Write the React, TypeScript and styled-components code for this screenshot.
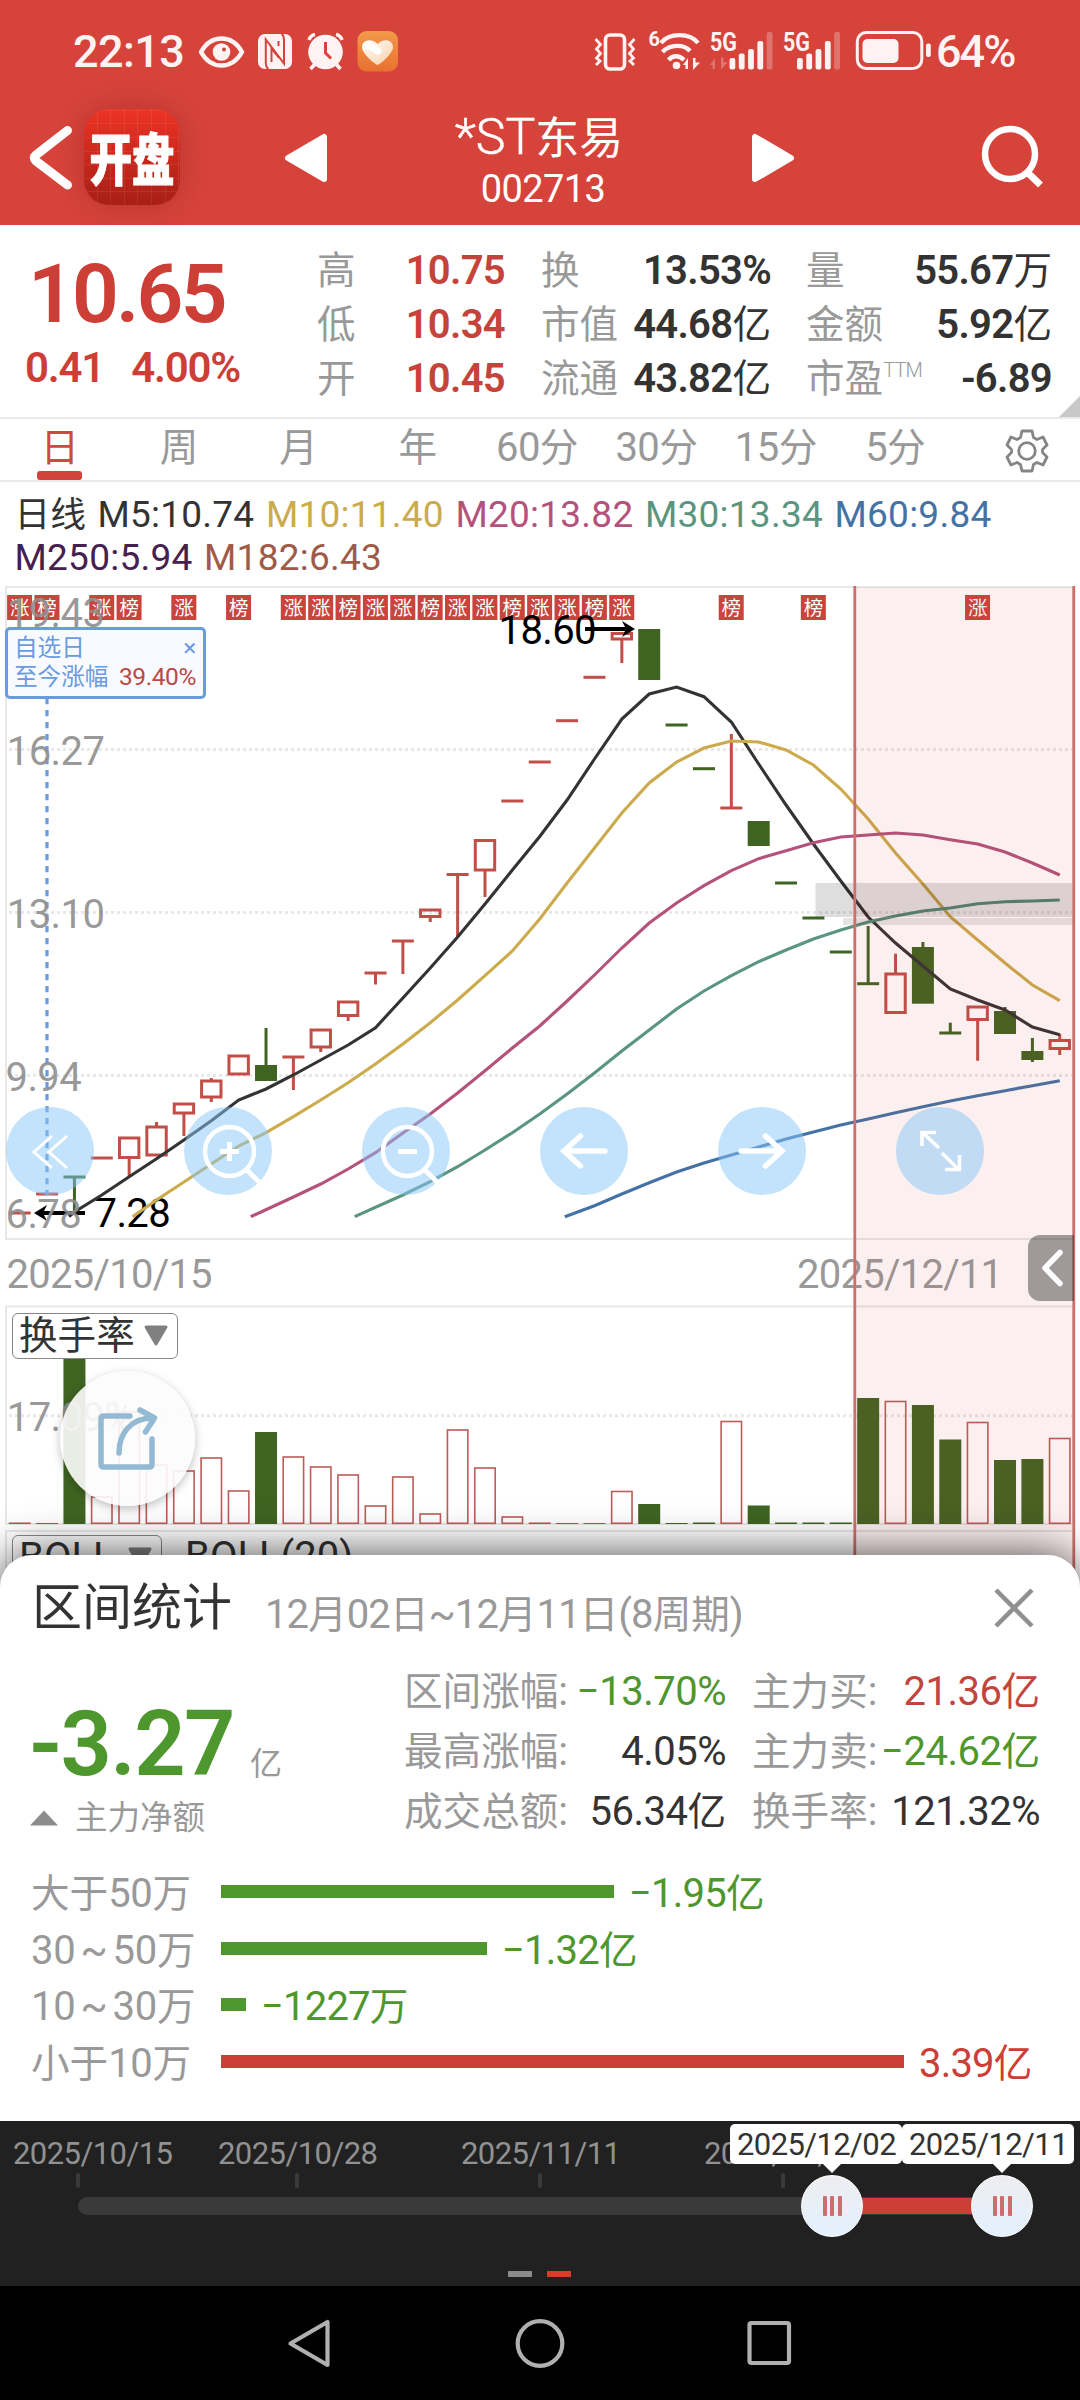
import React from "react";
import styled, { createGlobalStyle } from "styled-components";

const RED = "#cc3e36";
const INK = "#333";
const GREEN = "#4e962e";
const GREY = "#999";

const Global = createGlobalStyle`
  * { box-sizing: border-box; }
  body { margin: 0; background: #fff; }
  body, text { font-family: "Roboto", "Noto Sans CJK SC", sans-serif; }
`;

/* ---------- text ---------- */

const Han = styled.span<{ $weight?: number }>`
  font-size: 0.965em;
  line-height: 0;
  letter-spacing: 0;
  font-weight: ${(p) => p.$weight ?? "inherit"};
`;

/** Sets Chinese runs slightly smaller than the digits beside them. */
function Mixed({ text, weight }: { text: string; weight?: number }) {
  return (
    <span>
      {text.split(/([\u4e00-\u9fff]+)/).map((part, i) =>
        /[\u4e00-\u9fff]/.test(part) ? (
          <Han key={i} $weight={weight}>
            {part}
          </Han>
        ) : (
          part
        )
      )}
    </span>
  );
}

const Screen = styled.div`
  width: 1080px;
  height: 2400px;
  overflow: hidden;
  display: flex;
  flex-direction: column;
  background: #fff;
  color: ${INK};
  white-space: nowrap;
  font-size: 40px;
`;

/* ---------- red header ---------- */

const Header = styled.header`
  height: 225px;
  background: #d6433b;
  color: #fff;
  flex: none;
`;

const StatusBar = styled.div`
  height: 102px;
  padding: 0 66px 0 73px;
  display: flex;
  align-items: center;
  color: #fff2f2;
`;

const StatusText = styled.span<{ $width: number; $spacing: number }>`
  width: ${(p) => p.$width}px;
  padding-top: 2px;
  font-size: 45px;
  line-height: 50px;
  font-weight: 500;
  letter-spacing: ${(p) => p.$spacing}px;
`;

const Spacer = styled.span`
  flex: 1;
`;

const TitleBar = styled.div`
  height: 123px;
  display: flex;
  align-items: flex-start;
`;

const BackIcon = styled.svg`
  margin: 20px 0 0 26px;
`;

const AppLogo = styled.div`
  width: 96px;
  height: 96px;
  margin: 7px 0 0 8px;
  border-radius: 25px;
  display: flex;
  align-items: center;
  justify-content: center;
  background:
    repeating-linear-gradient(90deg, transparent 0 12.6px, rgba(255, 255, 255, 0.07) 12.6px 13.6px),
    repeating-linear-gradient(0deg, transparent 0 12.6px, rgba(255, 255, 255, 0.07) 12.6px 13.6px),
    linear-gradient(#ec3324, #a71f16);
  box-shadow: 0 0 26px rgba(120, 30, 30, 0.35);
`;

const LogoText = styled.span`
  font-family: "Noto Sans CJK SC", sans-serif;
  font-weight: 900;
  font-size: 42.5px;
  line-height: 42px;
  transform: scaleY(1.3);
  -webkit-text-stroke: 0.8px #fff;
`;

const StepIcon = styled.svg<{ $left: number }>`
  margin: 29px 0 0 ${(p) => p.$left}px;
`;

const TitleBlock = styled.div`
  width: 180px;
  margin-left: 120px;
  padding-top: 8px;
  display: flex;
  flex-direction: column;
  align-items: center;
`;

const StockName = styled.div`
  font-size: 50px;
  line-height: 54px;
  font-weight: 300;
  -webkit-text-stroke: 0.5px #fff;
  span { font-size: 44px; font-weight: 400; -webkit-text-stroke: 0; }
`;

const StockCode = styled.div`
  margin-top: -2px;
  padding-left: 8px;
  font-size: 38px;
  line-height: 50px;
  letter-spacing: -0.6px;
`;

const SearchIcon = styled.svg`
  margin: 20px 0 0 183px;
`;

/* ---------- quote ---------- */

const Quote = styled.section`
  position: relative;
  height: 194px;
  border-bottom: 2px solid #e9e9e9;
  display: flex;
  flex: none;
`;

const PriceBlock = styled.div`
  width: 317px;
  padding: 24px 0 0 25px;
  color: ${RED};
  font-weight: 600;
`;

const Price = styled.div`
  font-size: 82px;
  line-height: 90px;
  letter-spacing: -2.8px;
  padding-left: 3px;
`;

const Change = styled.div`
  display: flex;
  gap: 27px;
  font-size: 42px;
  line-height: 58px;
  letter-spacing: -1.2px;
`;

const QuoteColumn = styled.div<{ $width: number; $gap: number }>`
  width: ${(p) => p.$width}px;
  margin-right: ${(p) => p.$gap}px;
  padding-top: 18.5px;
`;

const QuoteRow = styled.div`
  height: 54px;
  line-height: 54px;
  display: flex;
  justify-content: space-between;
`;

const Label = styled.span`
  color: ${GREY};
  font-size: 40px;
`;

const TTM = styled.sup`
  font-size: 20px;
  font-weight: 300;
  line-height: 0;
  letter-spacing: -0.8px;
  vertical-align: 15px;
`;

const Figure = styled.span<{ $color?: string }>`
  color: ${(p) => p.$color ?? INK};
  font-size: 40px;
  font-weight: 600;
  letter-spacing: -0.7px;
`;

const Corner = styled.i`
  position: absolute;
  right: 0;
  bottom: 0;
  border: solid transparent;
  border-width: 21px 0 0 21px;
  border-bottom: 21px solid #c8c8c8;
  border-top: 0;
`;

/* ---------- period tabs and averages ---------- */

const Tabs = styled.nav`
  height: 63px;
  border-bottom: 2px solid #e9e9e9;
  display: flex;
  flex: none;
`;

const Tab = styled.div<{ $active?: boolean }>`
  width: 119.4px;
  height: 61px;
  padding-top: 4px;
  text-align: center;
  font-size: 40px;
  line-height: 50px;
  letter-spacing: -0.6px;
  color: ${(p) => (p.$active ? "#cc4a42" : GREY)};
  &::after {
    content: "";
    display: ${(p) => (p.$active ? "block" : "none")};
    width: 45px;
    height: 9px;
    margin: -2px auto 0;
    border-radius: 3px;
    background: #d0433b;
  }
`;

const GearIcon = styled.svg`
  margin: 9px 0 0 48.6px;
`;

const Averages = styled.div`
  height: 100px;
  padding: 11px 0 0 14.5px;
  flex: none;
`;

const AverageLine = styled.div`
  display: flex;
  gap: 11.5px;
  font-size: 37px;
  line-height: 43px;
  letter-spacing: 0.25px;
`;

const Average = styled.span<{ $color: string }>`
  color: ${(p) => p.$color};
`;

/* ---------- chart ---------- */

const Stage = styled.section`
  position: relative;
  height: 1003px;
  flex: none;
`;

const Plot = styled.svg`
  display: block;
`;

const Watch = styled.div`
  position: absolute;
  left: 5px;
  top: 45px;
  width: 201px;
  height: 72px;
  padding: 4px 7px 0 6px;
  border: 3px solid #6a9ae0;
  border-radius: 5px;
  background: #f8faff;
  color: #6a9ae0;
  font-size: 24.5px;
  line-height: 28.5px;
`;

const WatchRow = styled.div`
  display: flex;
  justify-content: space-between;
  letter-spacing: -0.4px;
`;

const Rise = styled.span`
  color: #b84a48;
`;

const ToolRow = styled.div`
  position: absolute;
  left: 6px;
  top: 525px;
  display: flex;
  gap: 90px;
`;

const Tool = styled.div`
  width: 88px;
  height: 88px;
  border-radius: 50%;
  background: rgba(136, 197, 250, 0.5);
  svg { display: block; }
`;

const SideHandle = styled.div`
  position: absolute;
  left: 1028px;
  top: 653px;
  width: 46px;
  height: 66px;
  border-radius: 12px 0 0 12px;
  background: rgba(0, 0, 0, 0.36);
`;

const IndicatorPick = styled.div<{ $top: number; $width: number }>`
  position: absolute;
  left: 12px;
  top: ${(p) => p.$top}px;
  width: ${(p) => p.$width}px;
  height: 46px;
  padding: 0 8px 0 6px;
  border: 1.5px solid #888;
  border-radius: 6px;
  display: flex;
  align-items: center;
  justify-content: space-between;
  font-size: 40px;
  line-height: 42px;
  background: #fff;
`;

const Caption = styled.span`
  position: absolute;
  left: 185px;
  top: 953px;
  font-size: 40px;
  line-height: 44px;
`;

const ShareButton = styled.div`
  position: absolute;
  left: 60px;
  top: 789px;
  width: 135px;
  height: 135px;
  border-radius: 50%;
  background: rgba(252, 252, 252, 0.9);
  box-shadow: 0 3px 10px rgba(0, 0, 0, 0.25);
`;

/* ---------- statistics sheet ---------- */

const Sheet = styled.section`
  position: relative;
  height: 566px;
  margin-top: -30px;
  border-radius: 32px 32px 0 0;
  background: #fff;
  box-shadow: 0 0 46px rgba(0, 0, 0, 0.72);
  clip-path: inset(-80px 0 0 0);
  flex: none;
`;

const SheetHead = styled.div`
  height: 105px;
  padding: 0 44px 0 32px;
  display: flex;
  align-items: center;
`;

const SheetTitle = styled.h2`
  margin: 0;
  width: 233px;
  font-size: 50px;
  line-height: 60px;
  font-weight: 400;
`;

const SheetRange = styled.span`
  flex: 1;
  padding-top: 15px;
  color: ${GREY};
  line-height: 50px;
  letter-spacing: -0.9px;
`;

const Summary = styled.div`
  height: 181px;
  display: flex;
`;

const NetBlock = styled.div`
  width: 404px;
  padding: 35px 0 0 29px;
  color: ${GREY};
`;

const Net = styled.div`
  display: flex;
  align-items: baseline;
  height: 98px;
  font-size: 32px;
  line-height: 100px;
`;

const NetValue = styled.b`
  width: 221px;
  color: ${GREEN};
  font-size: 90px;
  font-weight: 600;
  letter-spacing: -1.6px;
`;

const NetLabel = styled.div`
  display: flex;
  align-items: center;
  gap: 16px;
  font-size: 32.5px;
  line-height: 50px;
`;

const StatColumn = styled.div<{ $width: number; $gap: number }>`
  width: ${(p) => p.$width}px;
  margin-right: ${(p) => p.$gap}px;
  padding-top: 1.5px;
`;

const StatRow = styled.div`
  height: 60.3px;
  line-height: 60px;
  display: flex;
  justify-content: space-between;
`;

const StatValue = styled.span<{ $color?: string }>`
  color: ${(p) => p.$color ?? INK};
  letter-spacing: -0.5px;
`;

const Flows = styled.div`
  padding: 24px 0 0 31px;
`;

const FlowRow = styled.div<{ $color: string }>`
  height: 56.5px;
  display: flex;
  align-items: center;
  color: ${(p) => p.$color};
  line-height: 56px;
  letter-spacing: -0.8px;
  > span { padding-top: 2px; }
`;

const FlowLabel = styled.span`
  width: 190px;
  color: ${GREY};
  letter-spacing: -0.3px;
  word-spacing: -4.5px;
`;

const FlowBar = styled.i`
  height: 13px;
  margin: -3px 15px 0 0;
  background: currentColor;
`;

/* ---------- range slider ---------- */

const Slider = styled.section`
  position: relative;
  height: 165px;
  padding-top: 15px;
  background: #212121;
  flex: none;
`;

const Dates = styled.div`
  display: grid;
  grid-template-columns: 205px 243px 243px auto;
  padding-left: 13px;
  color: #919191;
  font-size: 31px;
  line-height: 36px;
  letter-spacing: -0.55px;
`;

const Ticks = styled.div`
  display: grid;
  grid-template-columns: 219px 243px 243px auto;
  padding: 1px 0 9px 76px;
`;

const Tick = styled.i`
  width: 4px;
  height: 15px;
  border-radius: 2px;
  background: #3a3a3a;
`;

const Track = styled.div`
  width: 944px;
  height: 18px;
  margin-left: 78px;
  border-radius: 9px;
  background: #3a3a3a;
  display: flex;
`;

const Chosen = styled.i`
  width: 171px;
  height: 16px;
  margin: 1px 0 0 753px;
  background: ${RED};
`;

const Thumb = styled.div<{ $left: number }>`
  position: absolute;
  left: ${(p) => p.$left}px;
  top: 54px;
  width: 62px;
  height: 62px;
  border-radius: 50%;
  border: 1px solid #fff;
  background: linear-gradient(#ededf0, #e3f1fe);
  display: flex;
  gap: 3.5px;
  align-items: center;
  justify-content: center;
`;

const Grip = styled.i`
  width: 4px;
  height: 20px;
  border-radius: 1px;
  background: #cc6e6e;
`;

const Flag = styled.div<{ $left: number; $tip: number }>`
  position: absolute;
  left: ${(p) => p.$left}px;
  top: 3px;
  width: 171.5px;
  height: 40px;
  padding-left: 7px;
  border-radius: 5px;
  background: #fff;
  font-size: 31px;
  line-height: 42px;
  letter-spacing: -0.6px;
  &::after {
    content: "";
    position: absolute;
    left: ${(p) => p.$tip}px;
    top: 40px;
    border: 9px solid transparent;
    border-top-color: #fff;
    border-bottom: 0;
  }
`;

const Pager = styled.div`
  position: absolute;
  left: 508px;
  top: 150px;
  display: flex;
  gap: 15px;
`;

const Page = styled.i<{ $on?: boolean }>`
  width: 24px;
  height: 6px;
  background: ${(p) => (p.$on ? "#d93c28" : "#8a8a8a")};
`;

const NavBar = styled.footer`
  flex: 1;
  background: #000;
  display: flex;
  justify-content: center;
  padding-top: 28px;
`;

/* ---------- data ---------- */

type Candle = { up: boolean; top: number; bottom?: number; high?: number; low?: number; vol: number };

const r = (top: number, vol: number, bottom?: number, high?: number, low?: number): Candle => ({ up: true, top, vol, bottom, high, low });
const g = (top: number, vol: number, bottom?: number, high?: number, low?: number): Candle => ({ up: false, top, vol, bottom, high, low });
const no = undefined;

const candles: Candle[] = [
  r(1213, 1522.5), r(1194, 1523), g(1177, 1358, no, no, 1211), r(1158, 1497), r(1138, 1412, 1157.5, no, 1176.5),
  r(1127, 1465, 1155, 1122), r(1104, 1471, 1113, no, 1136), r(1081, 1458, 1097, 1078, 1102), r(1056, 1491, 1074), g(1065, 1432, 1081, 1028),
  r(1057, 1457, no, no, 1090), r(1030, 1467, 1047, no, 1052), r(1002, 1475, 1015.5, no, 1021), r(973, 1506, no, no, 984.5), r(941, 1477, no, no, 974),
  r(910, 1514, 916.5, no, 922), r(874.5, 1430, no, no, 937), r(840.5, 1468, 870, no, 897), r(801, 1517), r(762, 1522.5),
  r(720.7, 1523), r(677.3, 1523), r(633.5, 1491.5, 639, no, 663), g(629, 1504, 680), g(725, 1523),
  g(768.7, 1522.5), r(808, 1421.5, no, 734), g(821, 1505.5, 846), g(883, 1522.5), g(918, 1522.5),
  g(952, 1522.5), g(983.7, 1398, no, 926), r(974, 1401.5, 1012.5, 953.7), g(947, 1405, 1003.7, 942), g(1033, 1439.5, no, 1022.7),
  r(1007, 1422.5, 1019.5, no, 1060.7), g(1011, 1460, 1034, 1007), g(1051, 1459, 1060, 1038, 1062), r(1040.5, 1438.5, 1048.5, 1034, 1055),
];

const badges: [number, string][] = [
  [0, "涨"], [1, "榜"], [3, "涨"], [4, "榜"], [6, "涨"], [8, "榜"], [10, "涨"], [11, "涨"], [12, "榜"], [13, "涨"], [14, "涨"],
  [15, "榜"], [16, "涨"], [17, "涨"], [18, "榜"], [19, "涨"], [20, "涨"], [21, "榜"], [22, "涨"], [26, "榜"], [29, "榜"], [35, "涨"],
];

type AverageSeries = { color: string; startX: number; from: number; values: number[] };

const series: AverageSeries[] = [
  { color: "#333", startX: 69, from: 2, values: [1212, 1195, 1176.7, 1158.7, 1140, 1120.7, 1100, 1089, 1075, 1060, 1045, 1027.7, 998, 968, 937, 904, 870, 836.5, 800, 759, 719, 694, 687, 696.7, 722, 764, 805, 844, 881, 917, 943, 966, 989, 1000, 1010, 1027, 1034.7] },
  { color: "#cbab4c", startX: 132.6, from: 5, values: [1200, 1182, 1164, 1146, 1132.7, 1116.7, 1100, 1082.7, 1064, 1044, 1022.7, 1000, 975.7, 951, 919, 883, 848, 813, 783, 762, 748, 741, 742, 750, 765, 789, 819, 853, 884, 916.7, 940, 963, 985, 1000.7] },
  { color: "#b4527c", startX: 250.7, from: 10, values: [1197, 1184, 1169, 1152.7, 1133, 1114, 1093, 1070.7, 1048, 1026, 1001, 975, 948, 923, 903, 885.7, 870.7, 858.7, 850.7, 842.7, 837, 835, 833, 835, 839.7, 844, 852, 863, 875] },
  { color: "#5a9580", startX: 354.7, from: 14, values: [1195, 1181.7, 1166.7, 1150, 1132.7, 1114, 1094, 1073, 1051, 1030, 1009, 991, 975.7, 961.7, 950, 939, 930, 922, 916, 911, 908, 903.7, 901.7, 901, 900] },
  { color: "#4472a5", startX: 564.8, from: 21, values: [1205.7, 1194, 1182.7, 1172, 1163, 1155, 1147, 1139, 1132, 1125, 1119, 1112.7, 1106.7, 1101, 1095.7, 1090.7, 1085.7, 1080.7] },
];

const cx = (i: number) => 19.7 + 27.37 * i;
const CANDLE_RED = "#c24e48";
const CANDLE_GREEN = "#3f6422";

function CandleMark({ c, i }: { c: Candle; i: number }) {
  const color = c.up ? CANDLE_RED : CANDLE_GREEN;
  const x = cx(i);
  const bottom = c.bottom ?? c.top;
  return (
    <g stroke={color} strokeWidth={3} fill="none">
      {c.high !== undefined && <path d={`M${x} ${c.high}V${c.top}`} />}
      {c.low !== undefined && <path d={`M${x} ${bottom}V${c.low}`} />}
      {c.bottom === undefined ? (
        <path d={`M${x - 11} ${c.top}h22`} />
      ) : c.up ? (
        <rect x={x - 9.7} y={c.top} width={19.4} height={bottom - c.top} />
      ) : (
        <rect x={x - 11} y={c.top} width={22} height={bottom - c.top} fill={color} stroke="none" />
      )}
    </g>
  );
}

function VolumeMark({ c, i }: { c: Candle; i: number }) {
  const x = cx(i);
  const h = 1524 - c.vol;
  if (c.up && h > 4) return <rect x={x - 10.2} y={c.vol} width={20.4} height={h - 0.7} fill="none" stroke="#bb5d58" strokeWidth={1.6} />;
  return <rect x={x - 11} y={c.vol} width={22} height={h} fill={c.up ? "#b8504a" : CANDLE_GREEN} />;
}

function PricePlot() {
  return (
    <Plot width="1080" height="1003" viewBox="0 582 1080 1003">
      <g fill="none" stroke="#e8e8e8" strokeWidth="2">
        <rect x="6" y="587" width="1067" height="652" />
        <path d="M6 1590V1531H1073M6 1524V1306.5H1073V1524H6" />
        <path strokeWidth="3" strokeDasharray="3 3" d="M9 749.5H1073M9 912.5H1073M9 1075.5H1073M9 1415.7H1073" />
      </g>
      {badges.map(([i, t]) => (
        <g key={i}>
          <rect x={cx(i) - 12.6} y="595" width="25" height="25" fill="#c8443d" />
          <text x={cx(i)} y="615" fontSize="19.5" textAnchor="middle" fill="#fff">{t}</text>
        </g>
      ))}
      {candles.map((c, i) => <CandleMark key={i} c={c} i={i} />)}
      <g fontSize="40" letterSpacing="-0.6" fill="#000">
        <text x="498.5" y="643.5">18.60</text>
        <text x="94.5" y="1227">7.28</text>
      </g>
      <g stroke="#000" strokeWidth="4" fill="#000">
        <path d="M585 629H630M85 1213H40" />
        <path stroke="none" d="M635 629l-13-8 4 8-4 8zM34 1213l13-8-4 8 4 8z" />
      </g>
      {series.map((s) => (
        <polyline
          key={s.color}
          fill="none"
          stroke={s.color}
          strokeWidth="3.1"
          points={`${s.startX},1216.7 ` + s.values.map((v, k) => `${cx(s.from + k)},${v}`).join(" ")}
        />
      ))}
      <path d="M47 698V1195" stroke="#6a9ae0" strokeWidth="3.2" strokeDasharray="6.3 5.7" />
      {candles.map((c, i) => <VolumeMark key={i} c={c} i={i} />)}
      <g fontSize="40" letterSpacing="-0.6" fill="#8f8f8f" fillOpacity="0.92">
        <text x="6.8" y="627">19.43</text>
        <text x="6.8" y="765">16.27</text>
        <text x="6.8" y="928">13.10</text>
        <text x="5.5" y="1091">9.94</text>
        <text x="5.5" y="1228">6.78</text>
        <text x="6.8" y="1431">17.09%</text>
        <text x="6.5" y="1288" letterSpacing="-0.75">2025/10/15</text>
        <text x="797" y="1288" letterSpacing="-0.75">2025/12/11</text>
      </g>
      <rect x="815.5" y="883" width="257" height="34" fill="#000" fillOpacity="0.13" />
      <rect x="843" y="918" width="230" height="7" fill="#000" fillOpacity="0.1" />
      <rect x="855" y="587" width="219" height="1000" fill="#d23c32" fillOpacity="0.08" />
      <path d="M854.8 586V1590M1073.8 586V1590" stroke="#cf6f6b" strokeWidth="2.8" />
    </Plot>
  );
}

const quoteColumns = [
  { width: 188, gap: 36, rows: [["高", "10.75"], ["低", "10.34"], ["开", "10.45"]], color: "#c4433b" },
  { width: 230, gap: 35, rows: [["换", "13.53%"], ["市值", "44.68亿"], ["流通", "43.82亿"]] },
  { width: 246, gap: 0, rows: [["量", "55.67万"], ["金额", "5.92亿"], ["市盈", "-6.89"]] },
];

const flows = [
  { label: "大于50万", width: 393, value: "−1.95亿", color: GREEN },
  { label: "30 ~ 50万", width: 266, value: "−1.32亿", color: GREEN },
  { label: "10 ~ 30万", width: 25, value: "−1227万", color: GREEN },
  { label: "小于10万", width: 683, value: "3.39亿", color: "#cc3e36" },
];

function LeftStatusIcons() {
  return (
    <svg width="220" height="48" viewBox="190 27 220 48">
      <path d="M201 52C211 34 232 34 242 52C232 70 211 70 201 52Z" fill="none" stroke="currentColor" strokeWidth="4.5" strokeLinejoin="round" />
      <circle cx="221.5" cy="52" r="8.8" fill="currentColor" />
      <circle cx="224" cy="49.5" r="2" fill="#d6433b" />
      <rect x="258" y="34" width="34" height="35" rx="7" fill="currentColor" />
      <path d="M268.500 70Q265.800 67 265.800 63V39.500L284 63.500V40Q284 36 281.500 33" fill="none" stroke="#d6433b" strokeWidth="2" />
      <path d="M271.500 62V48.500L279 58M278.500 41V46" fill="none" stroke="#d6433b" strokeWidth="2" />
      <circle cx="325.500" cy="52" r="17.300" fill="currentColor" />
      <path d="M325.500 42V53L331 58.500" fill="none" stroke="#d6433b" strokeWidth="3" />
      <path d="M309 40C310 37 312 35 315 34.500M342 40C341 37 339 35 336 34.500M315 64L310.500 69M336 64L340.500 69" stroke="currentColor" strokeWidth="3.600" fill="none" />
      <defs>
        <linearGradient id="app" x1="0" y1="0" x2="0" y2="1"><stop stopColor="#f39a4a" /><stop offset="1" stopColor="#e8702f" /></linearGradient>
        <linearGradient id="heart" x1="0" y1="0" x2="1" y2="1"><stop stopColor="#fff" /><stop offset="1" stopColor="#f8cfa8" /></linearGradient>
      </defs>
      <rect x="357.500" y="31" width="40.500" height="40.500" rx="9" fill="url(#app)" />
      <path d="M377.700 65C373 63 362 53 362 47C362 39 373 38 377.700 44C382.500 38 393 39 393 47C393 53 382 63 377.700 65Z" fill="url(#heart)" />
      <path d="M368 45L378 51" stroke="#fff" strokeWidth="7" strokeLinecap="round" />
    </svg>
  );
}

function RightStatusIcons() {
  const bars = (x: number) => [58, 53.5, 49, 41, 32].map((y, i) => (
    <rect key={i} x={x + i * 9.3} y={y} width="5.8" height={69.5 - y} rx="2" fill="currentColor" opacity={i === 4 ? 0.28 : 1} />
  ));
  return (
    <svg width="348" height="48" viewBox="588 27 348 48">
      <rect x="605.500" y="35" width="19" height="34" rx="4.500" fill="none" stroke="currentColor" strokeWidth="3.600" />
      <path d="M595.500 39l5 5.500-4 4.500 4 4.500-4 4.500 3.500 3-4 4M634.500 39l-5 5.500 4 4.500-4 4.500 4 4.500-3.500 3 4 4" fill="none" stroke="currentColor" strokeWidth="2.800" />
      <text x="648.500" y="46" fontSize="20" fontWeight="700" fill="currentColor">6</text>
      <g fill="none" stroke="currentColor" strokeWidth="4.400">
        <path d="M661 43C669 32.500 690 32.500 698 43M662.500 52C670 44 684 44 690 51M668.500 60C673 55 679 55 684 60" />
      </g>
      <circle cx="676.500" cy="65.500" r="3.800" fill="currentColor" />
      <path d="M683 65l5-7v11h-2.500v-4zM700 62.500l-7 7.500v-12h2.500v4.500z" fill="currentColor" />
      <g fontSize="26" fontWeight="700" fill="currentColor">
        <text x="710" y="51" textLength="27" lengthAdjust="spacingAndGlyphs">5G</text>
        <text x="783" y="51" textLength="27" lengthAdjust="spacingAndGlyphs">5G</text>
      </g>
      <path d="M710 65l5-7v11h-2.500v-4zM727.500 62.500l-6.500 7v-12h2.500v4.500z" fill="currentColor" opacity="0.28" />
      {bars(729.5)}
      {bars(797)}
      <rect x="857.300" y="32.500" width="64.500" height="36" rx="9" fill="none" stroke="currentColor" strokeWidth="3" />
      <rect x="862.500" y="39" width="36" height="24" rx="5" fill="currentColor" />
      <rect x="926" y="43.500" width="4.800" height="13.500" rx="2" fill="currentColor" />
    </svg>
  );
}

const toolIcons: React.ReactNode[] = [
  <path key="a" strokeLinecap="butt" strokeWidth="3" d="M46 29L28 45L46 61M61 29L43 45L61 61" />,
  <g key="b"><circle cx="45.500" cy="44.500" r="24.500" strokeWidth="4.500" /><path strokeLinecap="butt" strokeWidth="5" d="M36 44.500H55M45.500 35V54M63 63L76 76" /></g>,
  <g key="c"><circle cx="45.500" cy="44.500" r="24.500" strokeWidth="4.500" /><path strokeLinecap="butt" strokeWidth="5" d="M36 44.500H55M63 63L76 76" /></g>,
  <path key="d" strokeWidth="5.500" d="M65 44H25M40.500 29L24 44L40.500 59" />,
  <path key="e" strokeWidth="5.500" d="M23 44H63M47.500 29L64 44L47.500 59" />,
  <path key="f" strokeWidth="3.600" strokeLinecap="butt" d="M43 41L27 26M26 39V25.500H40M46 46L62 62M63.500 48V62.500H49" />,
];

export default function App() {
  return (
    <Screen>
      <Global />
      <Header>
        <StatusBar>
          <StatusText $width={117} $spacing={-0.6}>22:13</StatusText>
          <LeftStatusIcons />
          <Spacer />
          <RightStatusIcons />
          <StatusText $width={78} $spacing={-2}>64%</StatusText>
        </StatusBar>
        <TitleBar>
          <BackIcon width="50" height="72" viewBox="26 122 50 72">
            <path d="M67.500 130.500L36 155Q32.500 158 36 161L67.500 185" fill="none" stroke="#fff" strokeWidth="9" strokeLinecap="round" />
          </BackIcon>
          <AppLogo><LogoText>开盘</LogoText></AppLogo>
          <StepIcon $left={103} width="46" height="54" viewBox="0 0 46 54">
            <path d="M5 27L41 6V48Z" fill="#fff" stroke="#fff" strokeWidth="6" strokeLinejoin="round" />
          </StepIcon>
          <TitleBlock>
            <StockName>*ST<span>东易</span></StockName>
            <StockCode>002713</StockCode>
          </TitleBlock>
          <StepIcon $left={119} width="48" height="54" viewBox="0 0 48 54">
            <path d="M43 27L7 6V48Z" fill="#fff" stroke="#fff" strokeWidth="6" strokeLinejoin="round" />
          </StepIcon>
          <SearchIcon width="68" height="68" viewBox="978 122 68 68">
            <circle cx="1009" cy="154" r="25" fill="none" stroke="#fff" strokeWidth="6.500" />
            <path d="M1026 172L1039.500 185" stroke="#fff" strokeWidth="7" />
          </SearchIcon>
        </TitleBar>
      </Header>

      <Quote>
        <PriceBlock>
          <Price>10.65</Price>
          <Change><span>0.41</span><span>4.00%</span></Change>
        </PriceBlock>
        {quoteColumns.map((col) => (
          <QuoteColumn key={col.width} $width={col.width} $gap={col.gap}>
            {col.rows.map(([label, value]) => (
              <QuoteRow key={label}>
                <Label><Mixed text={label} />{label === "市盈" && <TTM>TTM</TTM>}</Label>
                <Figure $color={col.color}><Mixed text={value} weight={400} /></Figure>
              </QuoteRow>
            ))}
          </QuoteColumn>
        ))}
        <Corner />
      </Quote>

      <Tabs>
        {["日", "周", "月", "年", "60分", "30分", "15分", "5分"].map((t, i) => (
          <Tab key={t} $active={i === 0}><Mixed text={t} /></Tab>
        ))}
        <GearIcon width="46" height="46" viewBox="-23 -23 46 46" fill="none" stroke="#858585" strokeWidth="2.800" strokeLinejoin="round">
          <circle r="8.300" />
          <path d="M-5 -20H5L6.500 -13.500L10 -11.500L16 -14L20 -6L15.500 -1.500V1.500L20 6L16 14L10 11.500L6.500 13.500L5 20H-5L-6.500 13.500L-10 11.500L-16 14L-20 6L-15.500 1.500V-1.500L-20 -6L-16 -14L-10 -11.500L-6.500 -13.500Z" />
        </GearIcon>
      </Tabs>

      <Averages>
        <AverageLine>
          <Average $color={INK}><Mixed text="日线" /></Average>
          <Average $color={INK}>M5:10.74</Average>
          <Average $color="#cbab4c">M10:11.40</Average>
          <Average $color="#b4527c">M20:13.82</Average>
          <Average $color="#5a9580">M30:13.34</Average>
          <Average $color="#4472a5">M60:9.84</Average>
        </AverageLine>
        <AverageLine>
          <Average $color="#46204f">M250:5.94</Average>
          <Average $color="#a05a48">M182:6.43</Average>
        </AverageLine>
      </Averages>

      <Stage>
        <PricePlot />
        <Watch>
          <WatchRow><Mixed text="自选日" /><span>×</span></WatchRow>
          <WatchRow><Mixed text="至今涨幅" /><Rise>39.40%</Rise></WatchRow>
        </Watch>
        <ToolRow>
          {toolIcons.map((icon, i) => (
            <Tool key={i}>
              <svg width="88" height="88" viewBox="0 0 88 88" fill="none" stroke="#fff" strokeLinecap="round">{icon}</svg>
            </Tool>
          ))}
        </ToolRow>
        <SideHandle>
          <svg width="46" height="66" viewBox="0 0 46 66">
            <path d="M32 17.500L17 33L32 48.500" fill="none" stroke="#fff" strokeWidth="5.500" strokeLinecap="round" strokeLinejoin="round" />
          </svg>
        </SideHandle>
        <IndicatorPick $top={731} $width={166}>
          <Mixed text="换手率" />
          <svg width="26" height="22"><path d="M3 2H23L13 19Z" fill="#808080" stroke="#808080" strokeWidth="3" strokeLinejoin="round" /></svg>
        </IndicatorPick>
        <IndicatorPick $top={953} $width={150}>
          BOLL
          <svg width="26" height="22"><path d="M3 2H23L13 19Z" fill="#808080" stroke="#808080" strokeWidth="3" strokeLinejoin="round" /></svg>
        </IndicatorPick>
        <Caption>BOLL(20)</Caption>
        <ShareButton>
          <svg width="135" height="135" viewBox="60 1371 135 135" fill="none" stroke="#93b9d3" strokeWidth="5.500" strokeLinecap="round" strokeLinejoin="round">
            <path d="M130 1416H104Q101 1416 101 1419V1464Q101 1467 104 1467H149Q152 1467 152 1464V1439" />
            <path d="M119 1453C119 1433 131 1418 153 1418M140 1410L154.500 1418L145.500 1432" />
          </svg>
        </ShareButton>
      </Stage>

      <Sheet>
        <SheetHead>
          <SheetTitle>区间统计</SheetTitle>
          <SheetRange><Mixed text="12月02日~12月11日(8周期)" /></SheetRange>
          <svg width="44" height="44" viewBox="0 0 44 44"><path d="M4 4L40 40M40 4L4 40" stroke="#909090" strokeWidth="4.500" /></svg>
        </SheetHead>
        <Summary>
          <NetBlock>
            <Net><NetValue>-3.27</NetValue>亿</Net>
            <NetLabel>
              <svg width="30" height="16"><path d="M1 15.500L15 0.500L29 15.500Z" fill="#8c8c8c" /></svg>
              主力净额
            </NetLabel>
          </NetBlock>
          <StatColumn $width={322} $gap={26}>
            <StatRow><Label><Mixed text="区间涨幅:" /></Label><StatValue $color={GREEN}>−13.70%</StatValue></StatRow>
            <StatRow><Label><Mixed text="最高涨幅:" /></Label><StatValue>4.05%</StatValue></StatRow>
            <StatRow><Label><Mixed text="成交总额:" /></Label><StatValue><Mixed text="56.34亿" /></StatValue></StatRow>
          </StatColumn>
          <StatColumn $width={288} $gap={0}>
            <StatRow><Label><Mixed text="主力买:" /></Label><StatValue $color="#c2453d"><Mixed text="21.36亿" /></StatValue></StatRow>
            <StatRow><Label><Mixed text="主力卖:" /></Label><StatValue $color={GREEN}><Mixed text="−24.62亿" /></StatValue></StatRow>
            <StatRow><Label><Mixed text="换手率:" /></Label><StatValue>121.32%</StatValue></StatRow>
          </StatColumn>
        </Summary>
        <Flows>
          {flows.map((f) => (
            <FlowRow key={f.label} $color={f.color}>
              <FlowLabel><Mixed text={f.label} /></FlowLabel>
              <FlowBar style={{ width: f.width }} />
              <span><Mixed text={f.value} /></span>
            </FlowRow>
          ))}
        </Flows>
      </Sheet>

      <Slider>
        <Dates><span>2025/10/15</span><span>2025/10/28</span><span>2025/11/11</span><span>2025/11/24</span></Dates>
        <Ticks><Tick /><Tick /><Tick /><Tick /></Ticks>
        <Track><Chosen /></Track>
        <Thumb $left={801}><Grip /><Grip /><Grip /></Thumb>
        <Thumb $left={971}><Grip /><Grip /><Grip /></Thumb>
        <Flag $left={730} $tip={93}>2025/12/02</Flag>
        <Flag $left={902} $tip={91}>2025/12/11</Flag>
        <Pager><Page /><Page $on /></Pager>
      </Slider>

      <NavBar>
        <svg width="520" height="60" viewBox="280 2314 520 60" fill="none" stroke="#b0b0b0" strokeWidth="4.200" strokeLinejoin="round">
          <path d="M290.500 2343.500L327.500 2322V2365Z" />
          <circle cx="540" cy="2343.500" r="22.300" />
          <rect x="749.500" y="2323" width="39.500" height="40" rx="2" />
        </svg>
      </NavBar>
    </Screen>
  );
}
